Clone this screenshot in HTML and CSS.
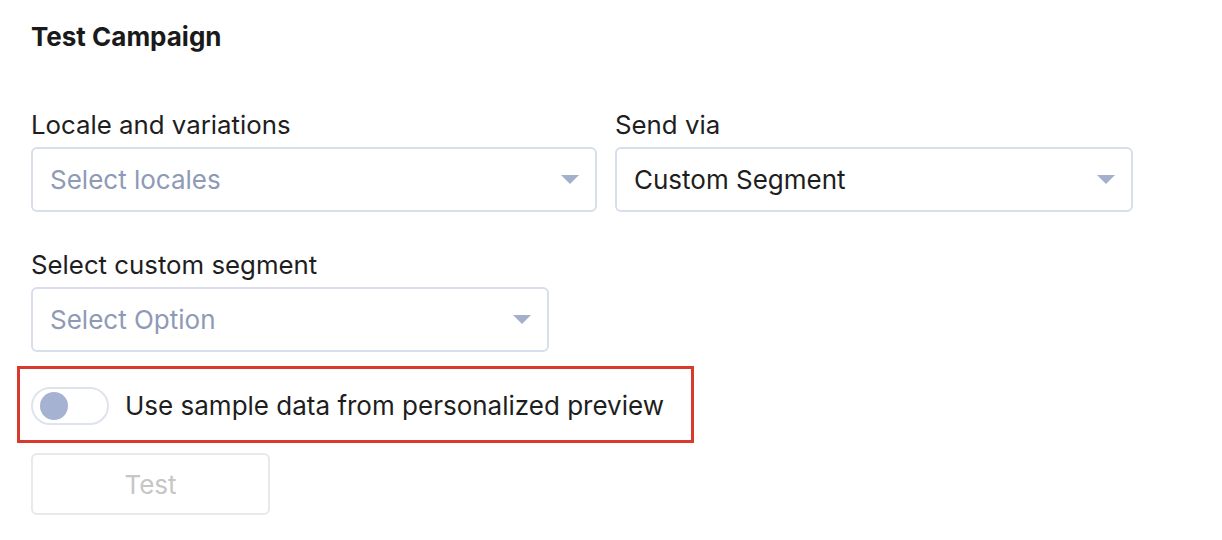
FILE: index.html
```html
<!DOCTYPE html>
<html lang="en">
<head>
<meta charset="utf-8">
<title>Test Campaign</title>
<link rel="stylesheet" href="styles.css">
</head>
<body>
<main class="panel">
  <h1 class="title">Test Campaign</h1>

  <div class="row">
    <div class="field field-wide">
      <label class="label">Locale and variations</label>
      <div class="select">
        <span class="placeholder">Select locales</span>
        <span class="caret"></span>
      </div>
    </div>
    <div class="field">
      <label class="label">Send via</label>
      <div class="select">
        <span class="value">Custom Segment</span>
        <span class="caret"></span>
      </div>
    </div>
  </div>

  <div class="row row-second">
    <div class="field">
      <label class="label">Select custom segment</label>
      <div class="select">
        <span class="placeholder">Select Option</span>
        <span class="caret"></span>
      </div>
    </div>
  </div>

  <div class="highlight">
    <span class="toggle"><span class="knob"></span></span>
    <span class="toggle-label">Use sample data from personalized preview</span>
  </div>

  <button class="btn" type="button" disabled>Test</button>
</main>
</body>
</html>
```

FILE: styles.css
```css
* { box-sizing: border-box; }

html, body {
  margin: 0;
  padding: 0;
  background: #ffffff;
}

body {
  font-family: Inter, "Noto Sans", "Liberation Sans", sans-serif;
  color: #1e1e1e;
}

.panel {
  padding: 22px 0 0 31px;
}

.title {
  margin: 0;
  font-size: 26px;
  line-height: 30px;
  font-weight: 700;
  color: #1a1a1a;
}

.row {
  display: flex;
  gap: 18px;
  margin-top: 58px;
}

.row-second {
  margin-top: 38px;
}

.field {
  display: flex;
  flex-direction: column;
  gap: 7px;
  width: 518px;
}

.field-wide {
  width: 566px;
}

.label {
  font-size: 25.8px;
  line-height: 30px;
  color: #1e1e1e;
}

.select {
  height: 65px;
  border: 2px solid #d8deec;
  border-radius: 6px;
  display: flex;
  align-items: center;
  justify-content: space-between;
  padding: 0 16px 0 17px;
  font-size: 26px;
}

.placeholder {
  color: #8e9ab6;
}

.value {
  color: #1e1e1e;
}

.caret {
  width: 0;
  height: 0;
  border-left: 9px solid transparent;
  border-right: 9px solid transparent;
  border-top: 9px solid #a3afcb;
}

.highlight {
  display: flex;
  align-items: center;
  gap: 16px;
  width: 677px;
  margin: 14px 0 0 -14px;
  padding: 18px 11px 15px;
  border: 3px solid #d83a2e;
}

.toggle {
  display: flex;
  align-items: center;
  width: 78px;
  height: 38px;
  border: 2px solid #dfe3ef;
  border-radius: 19px;
  padding-left: 7px;
  flex: none;
}

.knob {
  width: 28px;
  height: 28px;
  border-radius: 50%;
  background: #a6b2d2;
}

.toggle-label {
  font-size: 26px;
  line-height: 30px;
  color: #1e1e1e;
  white-space: nowrap;
}

.btn {
  display: block;
  margin-top: 10px;
  width: 239px;
  height: 62px;
  border: 2px solid #e9e9e9;
  border-radius: 6px;
  background: #ffffff;
  font-family: inherit;
  font-size: 26px;
  color: #c6c6c6;
}
```
